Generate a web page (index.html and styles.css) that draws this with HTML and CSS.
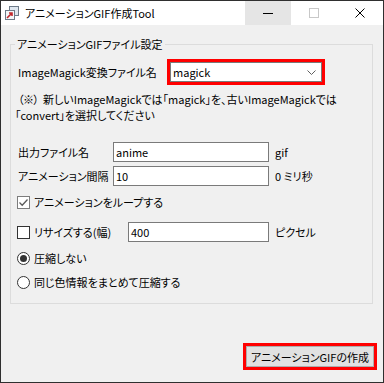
FILE: index.html
```html
<!DOCTYPE html>
<html>
  <head>
    <meta charset="utf-8" />
    <link rel="stylesheet" href="styles.css">
  </head>

  <body>
    <div id="window">
      <div id="titlebar">
        <svg class="app-icon" width="16" height="16" viewBox="0 0 16 16">
          <rect x="5.5" y="1.5" width="9" height="9" fill="#dfe7ef" stroke="#6d7a88" />
          <rect x="1.5" y="5.5" width="9" height="9" fill="#f4f6f8" stroke="#6d7a88" />
          <path d="M3 13 L8 8 M5 8 H8 V11" stroke="#c0282d" stroke-width="1.6" fill="none" />
        </svg>
        <span class="title">アニメーションGIF作成Tool</span>
        <div class="caption-buttons">
          <div class="cbtn hover">
            <svg width="10" height="10" viewBox="0 0 10 10"><path d="M0 5.5 H10" stroke="#000" /></svg>
          </div>
          <div class="cbtn">
            <svg width="10" height="10" viewBox="0 0 10 10"><rect x="0.5" y="0.5" width="9" height="9" fill="none" stroke="#c8c8c8" /></svg>
          </div>
          <div class="cbtn">
            <svg width="10" height="10" viewBox="0 0 10 10"><path d="M0.5 0.5 L9.5 9.5 M9.5 0.5 L0.5 9.5" stroke="#000" /></svg>
          </div>
        </div>
      </div>

      <div id="client">
        <fieldset class="group">
          <legend>アニメーションGIFファイル設定</legend>

          <div class="row row-combo">
            <span class="label w-combo">ImageMagick変換ファイル名</span>
            <div class="combo marked">
              <span>magick</span>
              <svg width="9" height="5" viewBox="0 0 9 5"><path d="M0.5 0.5 L4.5 4.5 L8.5 0.5" stroke="#606060" fill="none" /></svg>
            </div>
          </div>

          <div class="note">
            <div><span class="wide-mark">（※）</span>新しいImageMagickでは「magick」を、古いImageMagickでは</div>
            <div>「convert」を選択してください</div>
          </div>

          <div class="row row-first">
            <span class="label w-field">出力ファイル名</span>
            <div class="textbox wide">anime</div>
            <span class="unit">gif</span>
          </div>

          <div class="row">
            <span class="label w-field">アニメーション間隔</span>
            <div class="textbox wide">10</div>
            <span class="unit">0 ミリ秒</span>
          </div>

          <div class="row row-check">
            <span class="checkbox checked">
              <svg width="11" height="11" viewBox="0 0 11 11"><path d="M1.5 5.5 L4.2 8.2 L9.5 2.5" stroke="#5a5a5a" stroke-width="1.3" fill="none" /></svg>
            </span>
            <span class="label">アニメーションをループする</span>
          </div>

          <div class="row row-resize">
            <span class="checkbox"></span>
            <span class="label w-resize">リサイズする(幅)</span>
            <div class="textbox narrow">400</div>
            <span class="unit">ピクセル</span>
          </div>

          <div class="row row-radio1">
            <span class="radio checked"></span>
            <span class="label">圧縮しない</span>
          </div>

          <div class="row row-radio2">
            <span class="radio"></span>
            <span class="label">同じ色情報をまとめて圧縮する</span>
          </div>
        </fieldset>

        <div class="button marked">アニメーションGIFの作成</div>
      </div>
    </div>
  </body>
</html>
```

FILE: styles.css
```css
html,
body {
  margin: 0;
  padding: 0;
  background-color: #f0f0f0;
}

body {
  font-family: "Noto Sans CJK JP", "Noto Sans", sans-serif;
  font-size: 11px;
  font-feature-settings: "palt" 1;
  color: #000;
}

#window {
  width: 384px;
  height: 383px;
  box-sizing: border-box;
  border: 1px solid #2f2f2f;
  display: flex;
  flex-direction: column;
  background-color: #f0f0f0;
}

#titlebar {
  height: 24px;
  background-color: #fff;
  display: flex;
  align-items: center;
}

.app-icon {
  margin-left: 3px;
  flex: none;
}

.title {
  margin-left: 5px;
  line-height: 16px;
}

.caption-buttons {
  margin-left: auto;
  display: flex;
  height: 24px;
}

.cbtn {
  width: 46px;
  height: 24px;
  display: flex;
  align-items: center;
  justify-content: center;
}

.cbtn.hover {
  background-color: #e5e5e5;
}

#client {
  flex: 1;
  display: flex;
  flex-direction: column;
}

.group {
  margin: 11px 0 0 9px;
  width: 363px;
  box-sizing: border-box;
  border: 1px solid #dcdcdc;
  padding: 0 6px 11px 6px;
  min-width: 0;
}

.group legend {
  margin-left: -2px;
  padding: 0 2px;
  line-height: 16px;
}

.row {
  display: flex;
  align-items: center;
  height: 20px;
  margin-top: 4px;
}

.row > * {
  flex: none;
}

.row-combo {
  margin-top: 10px;
}

.row-first {
  margin-top: 19px;
}

.row-check {
  margin-top: 6px;
}

.row-resize {
  margin-top: 10px;
}

.row-radio1 {
  margin-top: 6px;
}

.label {
  line-height: 16px;
  white-space: nowrap;
}

.w-combo {
  width: 153px;
  padding-left: 1px;
  box-sizing: border-box;
}

.w-field {
  width: 96px;
  padding-left: 1px;
  box-sizing: border-box;
}

.w-resize {
  width: 94px;
}

.combo {
  width: 152px;
  height: 20px;
  box-sizing: border-box;
  border: 1px solid #7a7a7a;
  background-color: #fff;
  display: flex;
  align-items: center;
  justify-content: space-between;
  padding: 0 5px 0 2px;
}

.marked {
  outline: 3px solid #ff0000;
}

.note {
  margin: 9px 0 0 -2px;
  line-height: 16px;
  white-space: nowrap;
}

.wide-mark {
  font-feature-settings: normal;
  margin-left: -2px;
  letter-spacing: -1px;
}

.textbox {
  height: 20px;
  box-sizing: border-box;
  border: 1px solid #7a7a7a;
  background-color: #fff;
  padding-left: 2px;
  line-height: 18px;
}

.textbox.wide {
  width: 156px;
}

.textbox.narrow {
  width: 141px;
}

.unit {
  margin-left: 6px;
  line-height: 16px;
}

.checkbox {
  width: 13px;
  height: 13px;
  box-sizing: border-box;
  border: 1px solid #333;
  background-color: #fff;
  margin-right: 4px;
  display: flex;
  align-items: center;
  justify-content: center;
}

.checkbox.checked {
  border-color: #7d7d7d;
}

.radio {
  width: 13px;
  height: 13px;
  box-sizing: border-box;
  border: 1px solid #333;
  border-radius: 50%;
  background-color: #fff;
  margin-right: 4px;
  display: flex;
  align-items: center;
  justify-content: center;
}

.radio.checked::after {
  content: "";
  width: 7px;
  height: 7px;
  border-radius: 50%;
  background-color: #333;
}

.button {
  margin: auto 9px 15px auto;
  width: 128px;
  height: 21px;
  box-sizing: border-box;
  border: 1px solid #adadad;
  background-color: #e1e1e1;
  display: flex;
  align-items: center;
  justify-content: center;
  line-height: 16px;
  white-space: nowrap;
}
```
